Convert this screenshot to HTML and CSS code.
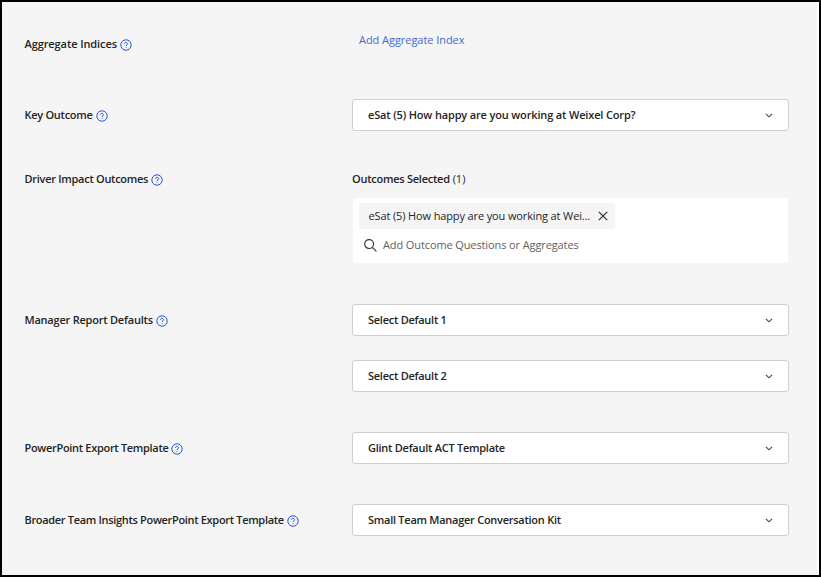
FILE: index.html
```html
<!DOCTYPE html>
<html lang="en">
<head>
<meta charset="utf-8">
<title>Report settings</title>
<link rel="stylesheet" href="styles.css">
</head>
<body>
<svg class="defs" aria-hidden="true">
  <symbol id="help" viewBox="0 0 12 12"><circle cx="6" cy="6" r="5.200"/><path d="M4.500 4.900C4.500 3.900 5.100 3.400 6 3.400s1.500.6 1.500 1.400C7.500 5.800 6.050 5.900 6.050 7"/><path d="M6.050 8.100v.8"/></symbol>
  <symbol id="chevron" viewBox="0 0 8 5"><path d="M.9.8 4 3.800 7.100.8"/></symbol>
</svg>
<main class="settings">
  <section class="row row-indices">
    <h2 class="label"><span class="text-indices">Aggregate Indices</span><svg class="help"><use href="#help"/></svg></h2>
    <div class="field"><a class="link">Add Aggregate Index</a></div>
  </section>
  <section class="row row-key">
    <h2 class="label"><span>Key Outcome</span><svg class="help"><use href="#help"/></svg></h2>
    <div class="field"><div class="select"><span class="text-question">eSat (5) How happy are you working at Weixel Corp?</span><svg class="chevron"><use href="#chevron"/></svg></div></div>
  </section>
  <section class="row row-driver">
    <h2 class="label"><span>Driver Impact Outcomes</span><svg class="help"><use href="#help"/></svg></h2>
    <div class="field">
      <div class="selected"><strong>Outcomes Selected</strong> <span>(1)</span></div>
      <div class="picker">
        <div class="chip"><span>eSat (5) How happy are you working at Wei...</span><svg class="close" viewBox="0 0 10 10"><path d="M.8.8 9.200 9.200M9.200.8.8 9.200"/></svg></div>
        <div class="search"><svg class="magnifier" viewBox="0 0 14 14"><circle cx="5.500" cy="5.500" r="4.800"/><path d="M9 9 13.400 13.400"/></svg><span>Add Outcome Questions or Aggregates</span></div>
      </div>
    </div>
  </section>
  <section class="row row-manager">
    <h2 class="label"><span class="text-manager">Manager Report Defaults</span><svg class="help"><use href="#help"/></svg></h2>
    <div class="field stack">
      <div class="select"><span>Select Default 1</span><svg class="chevron"><use href="#chevron"/></svg></div>
      <div class="select"><span>Select Default 2</span><svg class="chevron"><use href="#chevron"/></svg></div>
    </div>
  </section>
  <section class="row row-export">
    <h2 class="label"><span class="text-export">PowerPoint Export Template</span><svg class="help"><use href="#help"/></svg></h2>
    <div class="field"><div class="select"><span>Glint Default ACT Template</span><svg class="chevron"><use href="#chevron"/></svg></div></div>
  </section>
  <section class="row row-export">
    <h2 class="label"><span class="text-broader">Broader Team Insights PowerPoint Export Template</span><svg class="help"><use href="#help"/></svg></h2>
    <div class="field"><div class="select"><span>Small Team Manager Conversation Kit</span><svg class="chevron"><use href="#chevron"/></svg></div></div>
  </section>
</main>
</body>
</html>
```
FILE: styles.css
```css
* { box-sizing: border-box; }
body { margin: 0; background: #fff; }
.defs { position: absolute; width: 0; height: 0; }
svg { fill: none; flex: none; overflow: visible; }
.settings {
  width: 821px;
  height: 577px;
  padding: 30px 30px 0 22.500px;
  border: 2px solid #000;
  background: linear-gradient(90deg, #f5f5f5 815px, #fff 815px);
  color: #242424;
  font: 11px/16px "Open Sans", "Noto Sans", sans-serif;
}
.row { display: grid; grid-template-columns: 327.500px 437px; }
.label { display: flex; align-items: center; gap: 3px; height: 16px; margin: 8px 0 0; font-size: 11px; font-weight: 600; letter-spacing: -.28px; white-space: nowrap; }
.help { width: 12px; height: 12px; margin-top: 1px; stroke: #2b55d4; stroke-width: 1; }
.field { white-space: nowrap; }
.link { color: #4468d0; margin-left: 7px; letter-spacing: -.05px; }
.row-indices { height: 67px; }
.row-indices .label { margin-top: 4px; }
.row-key { height: 64px; }
.row-driver { height: 141px; }
.row-manager { height: 128px; }
.row-export { height: 72px; }
.text-indices { letter-spacing: -.09px; }
.text-manager { letter-spacing: -.22px; }
.text-export { letter-spacing: -.31px; }
.text-broader { letter-spacing: -.32px; }
.select { display: flex; align-items: center; justify-content: space-between; height: 32px; padding: 0 15px; border: 1px solid #cfcfcf; border-radius: 3px; background: #fff; font-weight: 600; letter-spacing: -.26px; }
.select .text-question { letter-spacing: -.155px; }
.chevron { width: 8px; height: 5px; stroke: #444; stroke-width: 1.100; }
.stack { display: flex; flex-direction: column; gap: 24px; }
.selected { height: 16px; margin: 8px 0 11px; }
.selected strong { font-weight: 600; letter-spacing: -.25px; }
.picker { width: 435px; height: 65px; padding: 5px 6px; border-radius: 3px; background: #fff; margin-left: 1px; }
.chip { display: flex; align-items: center; justify-content: space-between; width: 256px; height: 26px; padding: 0 7px 0 9.500px; border-radius: 3px; background: #f5f5f5; letter-spacing: -.13px; }
.close { width: 10px; height: 10px; stroke: #242424; stroke-width: 1.100; }
.search { display: flex; align-items: center; gap: 6px; height: 32px; padding-left: 5px; color: #616161; letter-spacing: -.11px; }
.magnifier { width: 13px; height: 13px; stroke: #333; stroke-width: 1.200; }
```
